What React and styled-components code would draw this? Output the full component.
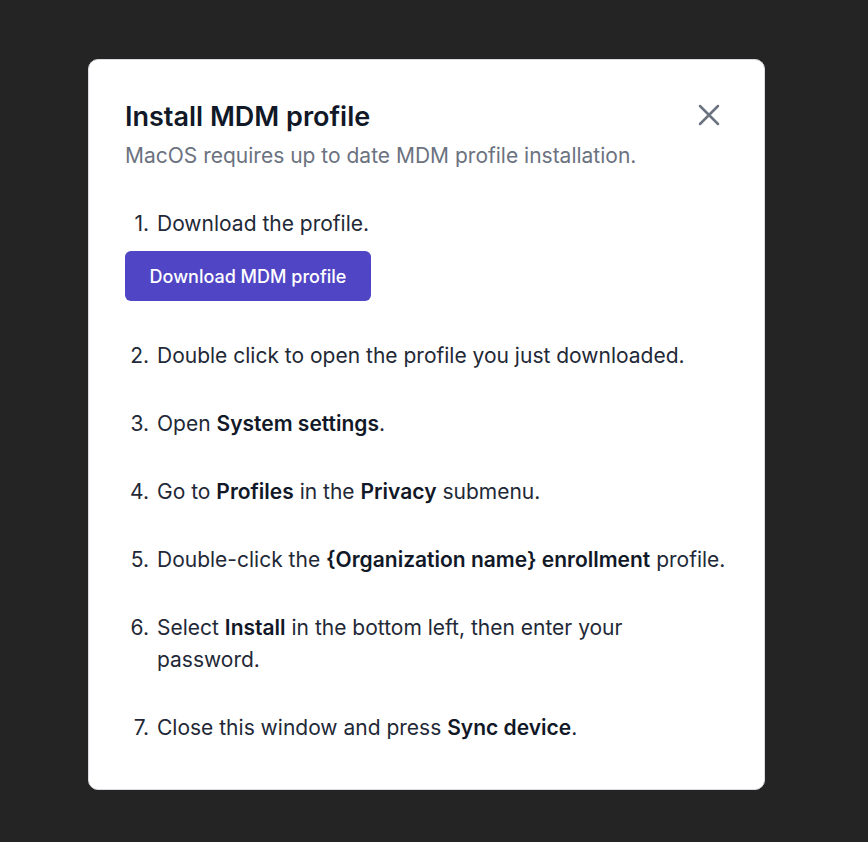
import styled, { createGlobalStyle } from 'styled-components';

const GlobalStyle = createGlobalStyle`
  body {
    margin: 0;
    background: #242424;
    font-family: Inter, "Noto Sans", sans-serif;
  }
`;

const Page = styled.div`
  min-height: 842px;
  padding-top: 59px;
  padding-left: 88px;
  box-sizing: border-box;
`;

const Modal = styled.div`
  width: 677px;
  height: 731px;
  box-sizing: border-box;
  background: #fff;
  border: 1px solid #d9dbe0;
  border-radius: 10px;
  padding: 40px 36px 48px 36px;
`;

const Header = styled.div`
  display: flex;
  justify-content: space-between;
  align-items: flex-start;
`;

const Title = styled.h2`
  margin: 0;
  font-size: 27px;
  line-height: 34px;
  font-weight: 600;
  color: #111827;
`;

const Subtitle = styled.p`
  margin: 8px 0 0;
  font-size: 21px;
  line-height: 28px;
  color: #6b7280;
`;

const CloseButton = styled.button`
  border: none;
  background: none;
  padding: 0;
  margin: 4px 8px 0 0;
  width: 22px;
  height: 22px;
  cursor: pointer;
  color: #6b7280;
`;

const Steps = styled.ol`
  list-style: none;
  margin: 38px 0 0;
  padding: 0;
  display: flex;
  flex-direction: column;
  gap: 36px;
`;

const Step = styled.li`
  display: flex;
  font-size: 21px;
  line-height: 32px;
  color: #1f2937;

  b {
    font-weight: 600;
    color: #111827;
  }
`;

const Num = styled.span`
  flex: none;
  width: 24px;
  margin-right: 8px;
  text-align: right;
`;

const Body = styled.div`
  flex: 1;
  max-width: 570px;
  display: flex;
  flex-direction: column;
  align-items: flex-start;
`;

const Button = styled.button`
  margin: 11px 0 3px -32px;
  width: 246px;
  height: 50px;
  border: none;
  border-radius: 6px;
  background: #5045c5;
  color: #fff;
  font-family: inherit;
  font-size: 18px;
  font-weight: 500;
  cursor: pointer;
`;

const steps = [
  <>Double click to open the profile you just downloaded.</>,
  <>Open <b>System settings</b>.</>,
  <>Go to <b>Profiles</b> in the <b>Privacy</b> submenu.</>,
  <>Double-click the <b>{'{Organization name} enrollment'}</b> profile.</>,
  <>Select <b>Install</b> in the bottom left, then enter your password.</>,
  <>Close this window and press <b>Sync device</b>.</>,
];

export default function App() {
  return (
    <>
      <GlobalStyle />
      <Page>
        <Modal>
          <Header>
            <div>
              <Title>Install MDM profile</Title>
              <Subtitle>MacOS requires up to date MDM profile installation.</Subtitle>
            </div>
            <CloseButton aria-label="Close">
              <svg width="22" height="22" viewBox="0 0 22 22" fill="none" stroke="currentColor" strokeWidth="2.5" strokeLinecap="round">
                <path d="M2 2 20 20M20 2 2 20" />
              </svg>
            </CloseButton>
          </Header>
          <Steps>
            <Step>
              <Num>1.</Num>
              <Body>
                Download the profile.
                <Button>Download MDM profile</Button>
              </Body>
            </Step>
            {steps.map((s, i) => (
              <Step key={i}>
                <Num>{i + 2}.</Num>
                <Body>
                  <span>{s}</span>
                </Body>
              </Step>
            ))}
          </Steps>
        </Modal>
      </Page>
    </>
  );
}
